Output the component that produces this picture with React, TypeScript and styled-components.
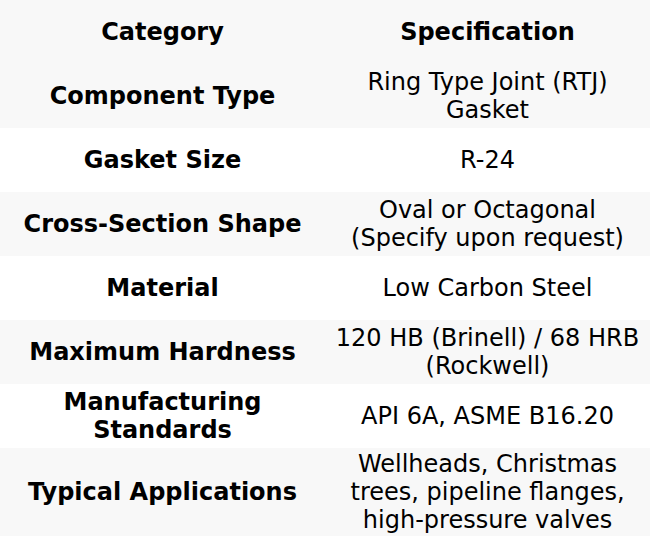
import React from "react";
import styled, { createGlobalStyle } from "styled-components";

const GlobalStyle = createGlobalStyle`
  html, body {
    margin: 0;
    padding: 0;
    background: #ffffff;
  }
  body {
    font-family: "DejaVu Sans", "Liberation Sans", sans-serif;
    color: #000;
  }
`;

const Table = styled.table`
  width: 650px;
  border-collapse: collapse;
  table-layout: fixed;
  font-size: 24px;
  line-height: 28px;
`;

const Row = styled.tr<{ $shaded?: boolean }>`
  height: 64px;
  background: ${(p) => (p.$shaded ? "#f8f8f8" : "#ffffff")};
`;

const HeadCell = styled.th`
  width: 50%;
  padding: 2px 8px;
  text-align: center;
  vertical-align: middle;
  font-weight: bold;
`;

const LabelCell = styled.td`
  padding: 2px 8px;
  text-align: center;
  vertical-align: middle;
  font-weight: bold;
`;

const ValueCell = styled.td`
  padding: 2px 8px;
  text-align: center;
  vertical-align: middle;
  font-weight: normal;
`;

const specs: [string, string][] = [
  ["Component Type", "Ring Type Joint (RTJ) Gasket"],
  ["Gasket Size", "R-24"],
  ["Cross-Section Shape", "Oval or Octagonal (Specify upon request)"],
  ["Material", "Low Carbon Steel"],
  ["Maximum Hardness", "120 HB (Brinell) / 68 HRB (Rockwell)"],
  ["Manufacturing Standards", "API 6A, ASME B16.20"],
  ["Typical Applications", "Wellheads, Christmas trees, pipeline flanges, high-pressure valves"],
];

export default function App() {
  return (
    <>
      <GlobalStyle />
      <Table>
        <thead>
          <Row $shaded>
            <HeadCell>Category</HeadCell>
            <HeadCell>Specification</HeadCell>
          </Row>
        </thead>
        <tbody>
          {specs.map(([label, value], i) => (
            <Row key={label} $shaded={i % 2 === 0}>
              <LabelCell>{label}</LabelCell>
              <ValueCell>{value}</ValueCell>
            </Row>
          ))}
        </tbody>
      </Table>
    </>
  );
}
